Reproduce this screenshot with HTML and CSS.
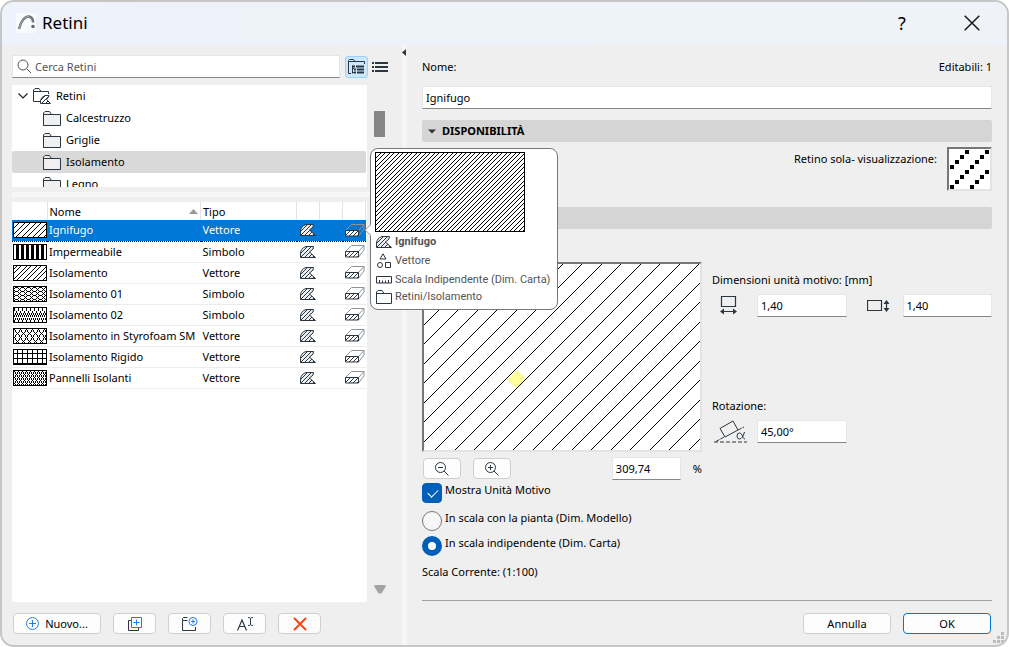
FILE: index.html
```html
<!DOCTYPE html>
<html lang="it">
<head>
<meta charset="utf-8">
<title>Retini</title>
<link rel="stylesheet" href="styles.css">
</head>
<body>
<svg class="defs" width="0" height="0" aria-hidden="true">
  <defs>
    <pattern id="p-diag" width="11" height="11" patternUnits="userSpaceOnUse"><path class="hatch" d="M0 5 5 0M0 11 11 0M5 11 11 5"/></pattern>
    <pattern id="p-pair" width="10" height="10" patternUnits="userSpaceOnUse"><path class="hatch" d="M0 3 3 0M3 10 10 3M0 7 7 0M7 10 10 7"/></pattern>
    <pattern id="p-bars" width="5" height="16" patternUnits="userSpaceOnUse"><path fill="#000" d="M2 0h3v16h-3z"/></pattern>
    <pattern id="p-scale" width="6" height="4" patternUnits="userSpaceOnUse"><path class="hatch" d="M1 .5h3M0 1.500h1M4 1.500h1M5 2.500h1M0 3.500h1M4 3.500h1"/></pattern>
    <pattern id="p-zig" width="4" height="14" patternUnits="userSpaceOnUse"><path class="hatch" d="M.5 0v3M2.500 3v2M1.500 5v2M3.500 5v2M.5 7v2M2.500 7v2M1.500 10v2M3.500 10v2M.5 12v2"/></pattern>
    <pattern id="p-diamond" width="6" height="8" patternUnits="userSpaceOnUse"><path class="hatch" d="M.5 0v1M1.500 1v2M1.500 6v2M2.500 3v1M2.500 5v1M3.500 4v1M4.500 3v1M4.500 5v1M5.500 1v2M5.500 6v2"/></pattern>
    <pattern id="p-grid" width="5" height="5" patternUnits="userSpaceOnUse"><path class="hatch" d="M0 3.500h5M3.500 0v5"/></pattern>
    <pattern id="p-dense" width="4" height="6" patternUnits="userSpaceOnUse"><path class="hatch" d="M.5 0v1M1.500 1v2M1.500 4v2M2.500 3v1M3.500 1v2M3.500 4v2"/></pattern>
    <pattern id="p-tip" width="9" height="9" patternUnits="userSpaceOnUse"><path class="hatch" d="M0 5 5 0M0 9 9 0M5 9 9 5"/></pattern>
    <pattern id="p-main" width="39" height="39" patternUnits="userSpaceOnUse"><path class="hatch" d="M0 2 2 0M0 22 22 0M2 39 39 2M22 39 39 22"/></pattern>
    <pattern id="p-icon" width="4" height="4" patternUnits="userSpaceOnUse"><path d="M-1 1 1-1M0 4 4 0M3 5 5 3" stroke="#2b3640" stroke-width="1"/></pattern>
    <symbol id="i-folder" viewBox="0 0 18 15"><path d="M.5 14.500V2L2 .5h4.500l2 3M.5 3.500h17v11H.5z" fill="#f0f0f0" stroke="#2b3640"/></symbol>
    <symbol id="i-fill" viewBox="0 0 16 12"><path d="M.5 11.500V7Q1 2 6 .5h7.500l-.5 2.500L9.500 6l6 5.500z" fill="#eceeef"/><path d="M.5 11.500V7Q1 2 6 .5h7.500l-.5 2.500L9.500 6l6 5.500z" fill="url(#p-icon)" stroke="#2b3640"/></symbol>
    <symbol id="i-slab" viewBox="0 0 20 13"><path d="m.5 6.500 6-6h12.500l-5.500 6M19 .5v4.500l-5.500 7" fill="none" stroke="#8c949a"/><path d="M.5 6.500h13v5.500H.5z" fill="#fff"/><path d="M.5 6.500h13v5.500H.5z" fill="url(#p-icon)" stroke="#2b3640"/></symbol>
  </defs>
</svg>

<main class="dialog">
  <header class="titlebar">
    <svg class="logo" width="20" height="20" viewBox="0 0 20 20" fill="none"><rect width="20" height="20" rx="3" fill="#fafbfc"/><path d="M3 16C5 8 9 3 13 3.500c3 .5 4 3 4 6" stroke="#707580" stroke-width="2.500"/><path d="M3 16C5 8 9 3 13 3.500" stroke="#a3a7ae" stroke-width="1"/><circle cx="17" cy="13.500" r="1.800" fill="#666b74"/></svg>
    <h1 class="title">Retini</h1>
    <button class="window-button" type="button">?</button>
    <button class="window-button" type="button" aria-label="Chiudi"><svg width="16" height="16" viewBox="0 0 16 16"><path d="m.7.700 14.600 14.600M15.300.700.700 15.300" stroke="#16181c" stroke-width="1.500"/></svg></button>
  </header>

  <div class="body">
    <section class="left">
      <div class="search-row">
        <label class="search">
          <svg width="15" height="15" viewBox="0 0 15 15" fill="none" stroke="#555"><circle cx="6" cy="6" r="5"/><path d="m9.700 9.700 4.300 4.300"/></svg>
          <input class="search-input" type="search" placeholder="Cerca Retini" aria-label="Cerca Retini">
        </label>
        <button class="view-button view-on" type="button" aria-label="Vista ad albero"><svg width="17" height="16" viewBox="0 0 17 16" fill="none" stroke="#2b3640"><path d="M3 14.500H.5V1.500L1.500.5h4l1.500 2h9.500V5M.5 2.500H7M4.500 6.500v8M4.500 9.500H6M4.500 13.500H6"/><path d="M4 7.500h3M8 7.500h8M6 10.500h2M9 10.500h7M6 13.500h2M9 13.500h7" stroke-width="2"/></svg></button>
        <button class="view-button" type="button" aria-label="Vista a elenco"><svg width="16" height="10" viewBox="0 0 16 10" stroke="#2b3640" stroke-width="2"><path d="M0 1h2M3 1h13M0 5h2M3 5h13M0 9h2M3 9h13"/></svg></button>
      </div>

      <div class="scroll-row">
        <ul class="tree">
          <li class="node root"><svg width="10" height="6" viewBox="0 0 10 6" fill="none" stroke="#222" stroke-width="1.200"><path d="m.5.500 4.500 4.500L9.500.500"/></svg><svg width="18" height="16" viewBox="0 0 18 16"><path d="M7 13.500H.5V2L2 .5h4l2 3h7.500V6M.5 3.500H8" fill="none" stroke="#2b3640"/><path d="M7.500 15.500v-3Q8 9 12 7.500h4L15.500 9l-2 2.500 4 4z" fill="url(#p-icon)" stroke="#2b3640"/></svg>Retini</li>
          <li class="node"><svg width="18" height="15"><use href="#i-folder"/></svg>Calcestruzzo</li>
          <li class="node"><svg width="18" height="15"><use href="#i-folder"/></svg>Griglie</li>
          <li class="node node-on"><svg width="18" height="15"><use href="#i-folder"/></svg>Isolamento</li>
          <li class="node"><svg width="18" height="15"><use href="#i-folder"/></svg>Legno</li>
        </ul>
        <div class="gutter"><div class="thumb"></div></div>
      </div>

      <div class="divider"></div>

      <div class="scroll-row grow">
        <div class="list">
          <table class="table">
            <thead>
              <tr><th class="c-swatch"></th><th class="c-name"><span class="sort">Nome<svg width="9" height="5" viewBox="0 0 9 5"><path d="M0 5 4.500 0 9 5z" fill="#999"/></svg></span></th><th class="c-type">Tipo</th><th class="c-icon"></th><th class="c-icon"></th><th class="c-icon"></th></tr>
            </thead>
            <tbody>
              <tr class="row-on"><td><svg class="swatch"><rect width="100%" height="100%" fill="url(#p-diag)"/></svg></td><td>Ignifugo</td><td>Vettore</td><td><svg class="icon-fill"><use href="#i-fill"/></svg></td><td></td><td><svg class="icon-slab"><use href="#i-slab"/></svg></td></tr>
              <tr><td><svg class="swatch"><rect width="100%" height="100%" fill="url(#p-bars)"/></svg></td><td>Impermeabile</td><td>Simbolo</td><td><svg class="icon-fill"><use href="#i-fill"/></svg></td><td></td><td><svg class="icon-slab"><use href="#i-slab"/></svg></td></tr>
              <tr><td><svg class="swatch"><rect width="100%" height="100%" fill="url(#p-pair)"/></svg></td><td>Isolamento</td><td>Vettore</td><td><svg class="icon-fill"><use href="#i-fill"/></svg></td><td></td><td><svg class="icon-slab"><use href="#i-slab"/></svg></td></tr>
              <tr><td><svg class="swatch"><rect width="100%" height="100%" fill="url(#p-scale)"/></svg></td><td>Isolamento 01</td><td>Simbolo</td><td><svg class="icon-fill"><use href="#i-fill"/></svg></td><td></td><td><svg class="icon-slab"><use href="#i-slab"/></svg></td></tr>
              <tr><td><svg class="swatch"><rect width="100%" height="100%" fill="url(#p-zig)"/></svg></td><td>Isolamento 02</td><td>Simbolo</td><td><svg class="icon-fill"><use href="#i-fill"/></svg></td><td></td><td><svg class="icon-slab"><use href="#i-slab"/></svg></td></tr>
              <tr><td><svg class="swatch"><rect width="100%" height="100%" fill="url(#p-diamond)"/></svg></td><td>Isolamento in Styrofoam SM</td><td>Vettore</td><td><svg class="icon-fill"><use href="#i-fill"/></svg></td><td></td><td><svg class="icon-slab"><use href="#i-slab"/></svg></td></tr>
              <tr><td><svg class="swatch"><rect width="100%" height="100%" fill="url(#p-grid)"/></svg></td><td>Isolamento Rigido</td><td>Vettore</td><td><svg class="icon-fill"><use href="#i-fill"/></svg></td><td></td><td><svg class="icon-slab"><use href="#i-slab"/></svg></td></tr>
              <tr><td><svg class="swatch"><rect width="100%" height="100%" fill="url(#p-dense)"/></svg></td><td>Pannelli Isolanti</td><td>Vettore</td><td><svg class="icon-fill"><use href="#i-fill"/></svg></td><td></td><td><svg class="icon-slab"><use href="#i-slab"/></svg></td></tr>
            </tbody>
          </table>

          <aside class="tooltip" role="tooltip">
            <svg class="tip-arrow" width="7" height="12" viewBox="0 0 7 12"><path d="M7 .5 1 6l6 5.500" fill="#fff" stroke="#9a9a9a"/></svg>
            <svg class="tip-preview"><rect width="100%" height="100%" fill="url(#p-tip)"/></svg>
            <p class="tip-line tip-name"><svg width="16" height="12"><use href="#i-fill"/></svg>Ignifugo</p>
            <p class="tip-line"><svg width="16" height="15" viewBox="0 0 16 15" fill="none" stroke="#2b3640"><path d="M7 .8 10 6H4zM9.500 9.500h5v5h-5z"/><circle cx="4" cy="12" r="2.500"/></svg>Vettore</p>
            <p class="tip-line"><svg width="16" height="8" viewBox="0 0 16 8" fill="none" stroke="#2b3640"><path d="M.5.500h15v6.500H.5zM3.500 7V4M6.500 7V4.500M9.500 7V4.500M12.500 7V4"/></svg>Scala Indipendente (Dim. Carta)</p>
            <p class="tip-line tip-last"><svg width="16" height="14" viewBox="0 0 16 14" fill="none" stroke="#2b3640"><path d="M.5 13.500V2L2 .5h4l2 3M.5 3.500h15v10H.5z"/></svg>Retini/Isolamento</p>
          </aside>
        </div>
        <div class="gutter gutter-end"><svg width="12" height="9" viewBox="0 0 12 9"><path d="M.5 0h11v2L7.500 8.500h-3L.5 2z" fill="#a3a3a3"/></svg></div>
      </div>

      <div class="tools">
        <button class="button button-new" type="button"><svg width="13" height="13" viewBox="0 0 13 13" fill="none" stroke="#2878e8"><circle cx="6.500" cy="6.500" r="6"/><path d="M6.500 3v7M3 6.500h7"/></svg>Nuovo...</button>
        <button class="button button-tool" type="button" aria-label="Duplica"><svg width="14" height="14" viewBox="0 0 14 14" fill="none"><path d="M3 3.500H.5v10h10V11" stroke="#2b3640"/><path d="M3.500.500h10v10h-10zM8.500 2.500v6M5.500 5.500h6" stroke="#2878e8"/></svg></button>
        <button class="button button-tool" type="button" aria-label="Nuova cartella"><svg width="16" height="14" viewBox="0 0 16 14" fill="none"><path d="M5.500 3.500h-5V1.500L1.500.500h4M.5 3.500v10h13V10" stroke="#2b3640"/><circle cx="11" cy="4.500" r="4" stroke="#2878e8"/><path d="M11 2.500v4M9 4.500h4" stroke="#2878e8"/></svg></button>
        <button class="button button-tool" type="button" aria-label="Rinomina"><svg width="16" height="14" viewBox="0 0 16 14" fill="none" stroke="#2b3640"><path d="M.5 13.500 5 3l4.500 10.500M2.500 9.500h5" stroke-width="1.200"/><path d="M11 .5q2.500 0 2.500 1Q13.500.500 16 .500M13.500 1.500v6M11 8.500q2.500 0 2.500-1 0 1 2.500 1"/></svg></button>
        <button class="button button-tool" type="button" aria-label="Elimina"><svg width="14" height="14" viewBox="0 0 14 14"><path d="m1 1 12 12M13 1 1 13" stroke="#ff4216" stroke-width="2"/></svg></button>
      </div>
    </section>

    <div class="splitter"><svg width="4" height="7" viewBox="0 0 4 7"><path d="M4 0v7L0 3.500z" fill="#333"/></svg></div>

    <section class="right">
      <div class="name-row"><label for="nome">Nome:</label><span>Editabili: 1</span></div>
      <input class="field" id="nome" type="text" value="Ignifugo">
      <button class="bar" type="button"><svg width="8" height="5" viewBox="0 0 8 5"><path d="M0 .5h8l-4 4z" fill="#333"/></svg>DISPONIBILITÀ</button>
      <div class="display-row"><span class="display-label">Retino sola- visualizzazione:</span>
        <button class="bitmap" type="button" aria-label="Retino sola-visualizzazione"><svg width="40" height="40" viewBox="0 0 40 40" fill="none" stroke="#000" stroke-width="4" shape-rendering="crispEdges"><path d="M15 2h4M35 2h4M10 7h4M30 7h4M5 12h4M25 12h4M0 17h4M20 17h4M15 22h4M35 22h4M10 27h4M30 27h4M5 32h4M25 32h4M0 37h4M20 37h4" transform="translate(1 1)"/></svg></button>
      </div>
      <div class="bar"></div>

      <div class="pattern">
        <div class="pattern-view">
          <svg class="preview"><path d="m93 106 9.500 9.500-9.500 9.500-9.500-9.500z" fill="#ff9"/><rect width="100%" height="100%" fill="url(#p-main)"/></svg>
          <div class="zoom-row">
            <button class="button button-zoom" type="button" aria-label="Riduci"><svg width="14" height="14" viewBox="0 0 14 14" fill="none" stroke="#2b3640"><circle cx="5.500" cy="5.500" r="5"/><path d="m9 9 4.500 4.500M3 5.500h5"/></svg></button>
            <button class="button button-zoom" type="button" aria-label="Ingrandisci"><svg width="14" height="14" viewBox="0 0 14 14" fill="none" stroke="#2b3640"><circle cx="5.500" cy="5.500" r="5"/><path d="m9 9 4.500 4.500M3 5.500h5M5.500 3v5"/></svg></button>
            <input class="field field-zoom" id="zoom" type="text" value="309,74"><label for="zoom">%</label>
          </div>
        </div>
        <div class="pattern-size">
          <p class="caption">Dimensioni unità motivo: [mm]</p>
          <div class="size-grid">
            <svg width="17" height="19" viewBox="0 0 17 19" fill="none" stroke="#2b3640"><path d="M1.500.500h14v10h-14zM1 15.500h15" stroke-width="1.200"/><path d="m0 15.500 4-3v6zM17 15.500l-4-3v6z" fill="#2b3640" stroke="none"/></svg>
            <input class="field" type="text" value="1,40" aria-label="Larghezza">
            <svg class="icon-height" width="23" height="12" viewBox="0 0 23 12" fill="none" stroke="#2b3640"><path d="M.5.500h14v10H.5zM19.500 2v8" stroke-width="1.200"/><path d="m19.500 0 3 4h-6zM19.500 12l3-4h-6z" fill="#2b3640" stroke="none"/></svg>
            <input class="field" type="text" value="1,40" aria-label="Altezza">
          </div>
          <p class="caption caption-rotation">Rotazione:</p>
          <div class="size-grid">
            <svg width="33" height="23" viewBox="0 0 33 23" fill="none" stroke="#2b3640"><path d="m6 8.500 13-7.500 5 9-13 7z"/><path d="m2 21.500 9-5M24 10l6-3" stroke-dasharray="4 1"/><path d="M0 22h33" stroke-dasharray="4 2"/><path d="M30.500 12q-2 7-5 7-2.500 0-2.500-3t2.500-3c3 0 3 6 5.500 6"/></svg>
            <input class="field" type="text" value="45,00°" aria-label="Rotazione">
          </div>
        </div>
      </div>

      <label class="option"><input class="box" type="checkbox" checked>Mostra Unità Motivo</label>
      <label class="option option-first"><input class="box radio" type="radio" name="scala">In scala con la pianta (Dim. Modello)</label>
      <label class="option option-second"><input class="box radio" type="radio" name="scala" checked>In scala indipendente (Dim. Carta)</label>
      <p class="current">Scala Corrente: (1:100)</p>

      <footer class="footer">
        <button class="button button-wide" type="button">Annulla</button>
        <button class="button button-wide button-ok" type="button">OK</button>
      </footer>
    </section>
  </div>
  <svg class="grip" width="11" height="11" viewBox="0 0 11 11"><path d="M8 0h3v3h-3zM4 4h3v3h-3zM8 4h3v3h-3zM0 8h3v3h-3zM4 8h3v3h-3zM8 8h3v3h-3z" fill="#bcbcbc"/></svg>
</main>
</body>
</html>
```
FILE: styles.css
```css
* { box-sizing: border-box; }

body {
  margin: 0;
  background: #fff;
  color: #000;
  font: 11px/16px "Noto Sans", "Open Sans", sans-serif;
}

p, h1, ul { margin: 0; padding: 0; }
svg { display: block; flex: none; }
button, input { font: inherit; color: inherit; margin: 0; }
.defs { position: absolute; }
.hatch { fill: none; stroke: #000; stroke-width: 1; shape-rendering: crispEdges; }

.dialog {
  position: relative;
  display: flex;
  flex-direction: column;
  min-height: 100vh;
  border: 2px solid #c6c6c6;
  border-radius: 14px;
  background: #efefef;
  overflow: hidden;
}

.titlebar {
  display: flex;
  align-items: center;
  height: 43px;
  padding: 0 0 2px 14px;
  background: linear-gradient(90deg, #eef2fb, #edf3f8 50%, #eff3f9);
}
.title { flex: 1; margin-left: 6px; font-size: 17px; line-height: 24px; font-weight: 400; }
.window-button {
  display: grid;
  place-items: center;
  width: 70px;
  height: 40px;
  padding: 0;
  border: 0;
  background: none;
  font-size: 18px;
}

.body { flex: 1; display: grid; grid-template-columns: minmax(0, 2fr) 5px minmax(0, 3fr); }

.left { display: flex; flex-direction: column; padding: 10px 0 11px 10px; }
.search-row { display: flex; align-items: center; padding-right: 11px; }
.search {
  flex: 1;
  display: flex;
  align-items: center;
  gap: 3px;
  height: 23px;
  margin-right: 5px;
  padding-left: 4px;
  background: #fff;
  border: 1px solid #e6e6e6;
  border-bottom-color: #868686;
}
.search-input { flex: 1; min-width: 0; padding: 0; border: 0; outline: 0; background: none; }
.search-input::placeholder { color: #555; opacity: 1; }
.view-button {
  display: grid;
  place-items: center;
  width: 23px;
  height: 22px;
  padding: 0;
  border: 1px solid transparent;
  border-radius: 3px;
  background: none;
}
.view-on { border-color: #99d1ff; background: #cce8ff; }

.scroll-row { display: flex; margin-top: 7px; }
.grow { flex: 1; margin-top: 5px; }
.gutter { width: 35px; padding: 26px 0 0 7px; }
.gutter-end { display: flex; align-items: flex-end; padding-bottom: 8px; }
.thumb { width: 11px; height: 26px; background: #868686; }

.tree { flex: 1; height: 102px; overflow: hidden; background: #fff; list-style: none; }
.node { display: flex; align-items: center; gap: 5px; height: 22px; margin-right: 1px; padding-left: 31px; border-radius: 2px; }
.root { padding-left: 6px; }
.node-on { background: #d9d9d9; }

.divider { height: 5px; margin-top: 5px; background: #f7f7f7; }

.list { position: relative; flex: 1; background: #fff; padding-right: 1px; }
.table { width: 100%; border-collapse: collapse; table-layout: fixed; }
.table th { height: 18px; padding: 0 2px; border-right: 1px solid #e3e3e3; font-weight: 400; text-align: left; line-height: 17px; }
.table td { height: 21px; padding: 0 2px; border-bottom: 1px solid #ececec; white-space: nowrap; line-height: 20px; }
.table td:first-child { padding: 0 0 0 1px; }
.table td:nth-child(4) { padding-left: 3px; }
.c-swatch { width: 35px; }
.c-type { width: 96px; }
.c-icon { width: 23px; }
.c-name { width: auto; }
.sort { display: flex; align-items: center; justify-content: space-between; }
.row-on { background: #0078d7; color: #fff; }
.table .row-on td { border-bottom: 1px dotted #000; }
.swatch { width: 34px; height: 16px; border: 1px solid #000; background: #fff; }
.icon-fill { width: 16px; height: 12px; }
.icon-slab { width: 20px; height: 13px; }

.tooltip {
  position: absolute;
  left: calc(100% + 3px);
  top: -54px;
  z-index: 2;
  width: 188px;
  padding: 3px 4px 4px;
  border: 1px solid #777;
  border-radius: 8px;
  background: #fff;
  color: #555;
  font-family: Roboto, "Noto Sans", sans-serif;
}
.tip-arrow { position: absolute; left: -7px; top: 75px; }
.tip-preview { width: 150px; height: 80px; border: 1px solid #000; }
.tip-line { display: flex; align-items: center; gap: 3px; height: 19px; padding-left: 1px; white-space: nowrap; }
.tip-name { font-weight: 700; }
.tip-last { height: 16px; }

.tools { display: flex; gap: 12px; margin-top: 11px; padding-left: 1px; }
.button {
  display: flex;
  align-items: center;
  justify-content: center;
  gap: 6px;
  height: 21px;
  padding: 0;
  border: 1px solid #cfcfcf;
  border-radius: 4px;
  background: #fdfdfd;
}
.button-new { width: 88px; }
.button-tool { width: 43px; }
.button-zoom { width: 38px; }
.button-wide { width: 88px; }
.button-ok { border-color: #0078d7; }

.splitter { padding: 4px 0 0; background: #f6f6f6; }

.right { display: flex; flex-direction: column; padding: 14px 15px 11px; }
.name-row { display: flex; justify-content: space-between; margin-bottom: 11px; }
.field {
  width: 100%;
  min-width: 0;
  height: 23px;
  padding: 0 3px;
  border: 1px solid #e6e6e6;
  border-bottom-color: #868686;
  border-radius: 0;
  background: #fff;
}
.bar {
  display: flex;
  align-items: center;
  gap: 6px;
  height: 22px;
  padding: 0 6px;
  border: 0;
  border-radius: 2px;
  background: #d5d5d5;
  font-weight: 700;
}
button.bar { margin-top: 11px; }
.display-row { display: flex; justify-content: flex-end; gap: 10px; margin: 5px 0 16px; }
.display-label { margin-top: 4px; }
.bitmap { width: 45px; height: 44px; padding: 0; border: 2px solid #777; border-right-color: #e3e3e3; border-bottom-color: #e3e3e3; background: #fff; }

.pattern { display: grid; grid-template-columns: 1fr 1fr; gap: 10px; margin-top: 33px; }
.preview { width: 100%; height: 190px; border: 2px solid #777; border-right-color: #e3e3e3; border-bottom-color: #e3e3e3; background: #fff; }
.zoom-row { display: flex; align-items: center; gap: 12px; margin-top: 5px; padding-left: 1px; }
.zoom-row .field-zoom { width: 69px; margin-left: auto; }
.pattern-size { padding-top: 10px; }
.caption { margin-bottom: 6px; }
.caption-rotation { margin-top: 81px; }
.size-grid { display: grid; grid-template-columns: 45px 1fr 56px 1fr; align-items: center; }
.size-grid svg { justify-self: start; margin-left: 8px; }
.size-grid .icon-height { margin-left: 20px; }
.caption-rotation + .size-grid svg { margin-left: 2px; }

.option { display: flex; align-items: flex-start; gap: 3px; height: 20px; margin-top: 3px; line-height: 14px; }
.option-first { margin-top: 8px; }
.option-second { margin-top: 5px; }
.box {
  appearance: none;
  flex: none;
  width: 20px;
  height: 20px;
  border: 1px solid #777;
  border-radius: 4px;
  background: #f7f7f7;
}
.box:checked { border-color: #005fb8; background: #005fb8; }
.box[type="checkbox"]:checked::before {
  content: "";
  display: block;
  width: 9px;
  height: 5px;
  margin: 5px 0 0 5px;
  border: solid #fff;
  border-width: 0 0 1px 1px;
  transform: rotate(-45deg);
}
.radio { border-radius: 50%; }
.radio:checked { border-width: 6px; background: #fff; }
.current { margin-top: 8px; }

.footer {
  display: flex;
  justify-content: flex-end;
  gap: 12px;
  margin-top: auto;
  padding: 12px 1px 0;
  border-top: 1px solid #a0a0a0;
}

.grip { position: absolute; right: 3px; bottom: 2px; }
```
